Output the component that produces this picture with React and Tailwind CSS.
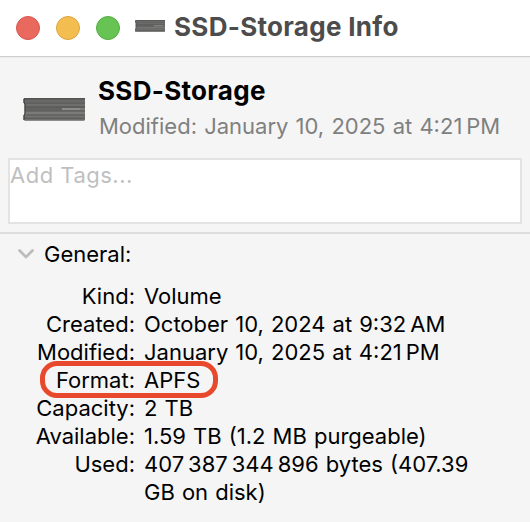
const rows = [
  { label: 'Kind:', value: 'Volume' },
  { label: 'Created:', value: 'October 10, 2024 at 9:32\u2009AM' },
  { label: 'Modified:', value: 'January 10, 2025 at 4:21\u2009PM' },
  { label: 'Format:', value: 'APFS', marked: true },
  { label: 'Capacity:', value: '2 TB' },
  { label: 'Available:', value: '1.59 TB (1.2 MB purgeable)' },
  { label: 'Used:', value: '407\u2009387\u2009344\u2009896 bytes (407.39 GB on disk)' },
];

function DriveIcon({ id, className }) {
  return (
    <svg viewBox="0 0 62 23" preserveAspectRatio="none" className={className}>
      <defs>
        <linearGradient id={id} x1="0" y1="0" x2="0" y2="1">
          <stop offset="0" stopColor="#4d4d4c" />
          <stop offset="0.12" stopColor="#6b6b6a" />
          <stop offset="0.5" stopColor="#626261" />
          <stop offset="0.62" stopColor="#787877" />
          <stop offset="0.8" stopColor="#6c6c6a" />
          <stop offset="0.9" stopColor="#5a5a58" />
          <stop offset="1" stopColor="#9a9a98" />
        </linearGradient>
      </defs>
      <path d="M1 0H62V22L61 23H2L0.5 22V17L1.5 16V6L0.5 5V1Z" fill={`url(#${id})`} />
      <path d="M3 5H62M3 9H62M3 13H62M3 17H62" stroke="#4c4c4b" strokeOpacity="0.55" strokeWidth="1" />
      <path d="M3 7H62M3 15H62M3 19H62" stroke="#8c8c8a" strokeOpacity="0.45" strokeWidth="1" />
      <path d="M39 11H57" stroke="#b4b4b2" strokeWidth="1" />
      <path d="M57 11H62" stroke="#979795" strokeWidth="1" />
      <path d="M1 1V5L2 6V16L1 17V22" stroke="#3a3a3a" strokeWidth="1" fill="none" />
    </svg>
  );
}

export default function App() {
  return (
    <div className="w-[530px] h-[522px] overflow-hidden bg-[#f5f5f5] font-['Inter',sans-serif] text-black">
      <header className="flex items-center h-[57px] bg-white border-b border-[#cdcdcd] pl-4 pb-[1px]">
        <div className="flex gap-4">
          <span className="size-6 rounded-full bg-[#e9695e] border border-[#d4574e]"></span>
          <span className="size-6 rounded-full bg-[#f3bd4f] border border-[#dca63f]"></span>
          <span className="size-6 rounded-full bg-[#67c454] border border-[#55ad43]"></span>
        </div>
        <DriveIcon id="drive-small" className="w-[30px] h-3 ml-[15px] mb-1" />
        <h1 className="ml-[9px] mb-0.5 text-[26px] leading-8 font-bold tracking-[0.3px] text-[#4c4c4c] whitespace-nowrap">SSD-Storage Info</h1>
      </header>

      <section className="h-[101px] flex border-t border-[#ececec] pl-[23px]">
        <DriveIcon id="drive-large" className="w-[62px] h-[23px] mt-[40px] shrink-0" />
        <div className="ml-[13px] pt-[17px] whitespace-nowrap">
          <h2 className="text-[26px] leading-8 font-bold tracking-[0.3px]">SSD-Storage</h2>
          <p className="mt-[5px] ml-px text-[22px] leading-7 [word-spacing:1px] text-[#808080]">Modified: January 10, 2025 at 4:21&#8201;PM</p>
        </div>
      </section>

      <div className="mx-2 h-[66px] bg-white border-2 border-[#e3e3e3] text-[22px] leading-[31px] tracking-[0.5px] text-[#bfbfbf]">Add Tags...</div>

      <section className="mt-2 border-t-2 border-[#dddddd]">
        <div className="flex items-center h-[40px] pl-[18px] text-[22px]">
          <svg viewBox="0 0 16 10" className="w-4 h-[10px]" fill="none" stroke="#bcbcbc" strokeWidth="2.7" strokeLinecap="round" strokeLinejoin="round">
            <path d="M1.5 1.5L8 8L14.5 1.5" />
          </svg>
          <span className="ml-[10px]">General:</span>
        </div>
        <dl className="mt-2 text-[22px] leading-7">
          {rows.map((row) => (
            <div key={row.label} className="relative flex">
              <dt className="w-[135px] shrink-0 text-right whitespace-nowrap">{row.label}</dt>
              <dd className="ml-[9px] w-[340px] [word-spacing:0.9px]">{row.value}</dd>
              {row.marked && (
                <span className="absolute left-10 -top-[5px] w-[178px] h-[37px] rounded-[17px] border-[5px] border-[#e8492c]"></span>
              )}
            </div>
          ))}
        </dl>
      </section>
    </div>
  );
}
